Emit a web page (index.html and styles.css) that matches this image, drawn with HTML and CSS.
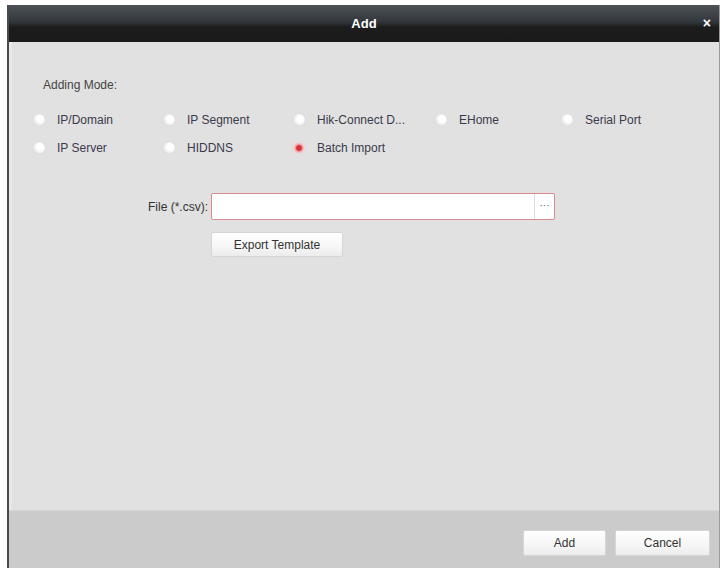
FILE: index.html
```html
<!DOCTYPE html>
<html lang="en">
<head>
    <meta charset="UTF-8">
    <title>Add</title>
    <link rel="stylesheet" href="styles.css">
</head>
<body>

<div class="dialog">
    <div class="titlebar">
        <span class="title">Add</span>
        <span class="close">&#215;</span>
    </div>

    <div class="content">
        <div class="mode-label">Adding Mode:</div>

        <!-- Modos de adicao -->
        <div class="modes">
            <label class="radio"><span class="dot"></span>IP/Domain</label>
            <label class="radio"><span class="dot"></span>IP Segment</label>
            <label class="radio"><span class="dot"></span>Hik-Connect D...</label>
            <label class="radio"><span class="dot"></span>EHome</label>
            <label class="radio"><span class="dot"></span>Serial Port</label>
            <label class="radio"><span class="dot"></span>IP Server</label>
            <label class="radio"><span class="dot"></span>HIDDNS</label>
            <label class="radio checked"><span class="dot"></span>Batch Import</label>
        </div>

        <!-- Importar arquivo -->
        <div class="file-row">
            <span class="file-label">File (*.csv):</span>
            <div class="file-input">
                <span class="file-path"></span>
                <span class="browse">&middot;&middot;&middot;</span>
            </div>
        </div>
        <div class="export-row">
            <button class="btn export">Export Template</button>
        </div>
    </div>

    <div class="footer">
        <button class="btn">Add</button>
        <button class="btn cancel">Cancel</button>
    </div>
</div>

</body>
</html>
```

FILE: styles.css
```css
* {
    margin: 0;
    padding: 0;
    box-sizing: border-box;
}

body {
    font-family: 'Liberation Sans', Arial, sans-serif;
    font-size: 12px;
    color: #333;
    background-color: #fff;
    padding: 5px 1px 0 7px;
    height: 568px;
    overflow: hidden;
}

.dialog {
    display: flex;
    flex-direction: column;
    height: 563px;
    border-left: 2px solid #4a4a4a;
    border-right: 1px solid #9a9a9a;
}

.titlebar {
    height: 37px;
    background: linear-gradient(#4c5258, #33373b 45%, #1c1c1c 60%, #1a1a1a);
    display: flex;
    align-items: center;
    justify-content: center;
    position: relative;
}

.title {
    color: #fff;
    font-size: 13px;
    font-weight: bold;
}

.close {
    position: absolute;
    right: 8px;
    top: 10px;
    color: #fff;
    font-size: 14px;
    font-weight: bold;
}

.content {
    flex: 1;
    background-color: #e1e1e1;
    border-left: 3px solid #e8e8e8;
    padding: 36px 0 0 21px;
}

.mode-label {
    margin-left: 10px;
    color: #444;
}

.modes {
    display: grid;
    grid-template-columns: 130px 130px 142px 126px 130px;
    row-gap: 12px;
    margin-top: 20px;
}

.radio {
    display: flex;
    align-items: center;
    gap: 12px;
    height: 16px;
    color: #3a3a4a;
}

.dot {
    width: 12px;
    height: 12px;
    border-radius: 50%;
    background: radial-gradient(circle at 60% 40%, #fff 30%, #e9e9e9 65%, #c9c9c9);
    box-shadow: 0 0 1px #bbb;
}

.checked .dot {
    background: radial-gradient(circle, #d9323a 28%, #ee9ea2 42%, #fbe3e4 70%, #eccfd1);
}

.file-row {
    display: flex;
    align-items: center;
    margin-top: 37px;
    padding-left: 89px;
}

.file-label {
    width: 89px;
    text-align: right;
    padding-right: 3px;
    color: #333;
}

.file-input {
    width: 344px;
    height: 27px;
    background-color: #fff;
    border: 1px solid #d98a8d;
    border-radius: 2px;
    display: flex;
}

.file-path {
    flex: 1;
}

.browse {
    width: 20px;
    border-left: 1px solid #ddd;
    text-align: center;
    color: #666;
    font-size: 10px;
    line-height: 24px;
}

.export-row {
    padding-left: 178px;
    margin-top: 12px;
}

.btn {
    font-family: 'Liberation Sans', Arial, sans-serif;
    font-size: 12px;
    color: #333;
    height: 26px;
    width: 83px;
    background: linear-gradient(#fff, #f6f6f6 60%, #ececec);
    border: 1px solid #d6d6d6;
    border-radius: 2px;
}

.export {
    width: 132px;
    height: 25px;
}

.footer {
    height: 58px;
    background-color: #cbcbcb;
    border-top: 1px solid #d6d6d6;
    display: flex;
    justify-content: flex-end;
    align-items: flex-start;
    gap: 9px;
    padding: 19px 9px 0 0;
}

.cancel {
    width: 95px;
}
```
